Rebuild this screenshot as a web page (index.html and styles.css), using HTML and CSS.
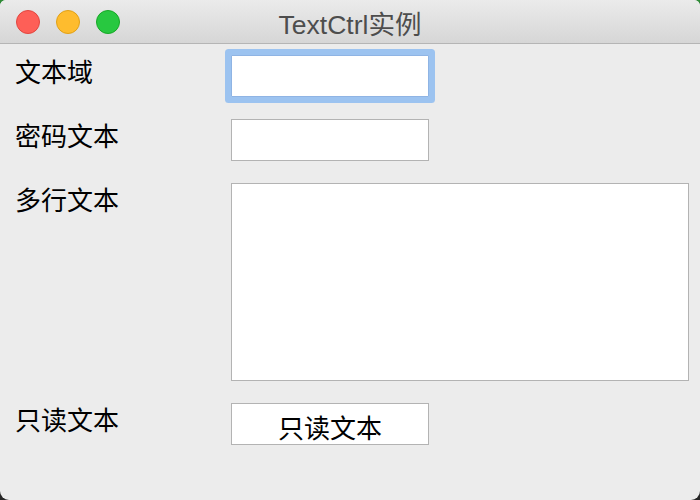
FILE: index.html
```html
<!DOCTYPE html>
<html lang="zh">
<head>
<meta charset="utf-8">
<title>TextCtrl实例</title>
<link rel="stylesheet" href="styles.css">
</head>
<body>
<div class="window">
  <header class="titlebar">
    <div class="lights">
      <span class="light red"></span>
      <span class="light yellow"></span>
      <span class="light green"></span>
    </div>
    <div class="title">TextCtrl实例</div>
    <div class="spacer"></div>
  </header>
  <main class="form">
    <label class="label" for="f1">文本域</label>
    <div class="cell"><input id="f1" class="field focused" type="text"></div>

    <label class="label" for="f2">密码文本</label>
    <div class="cell"><input id="f2" class="field" type="password"></div>

    <label class="label" for="f3">多行文本</label>
    <div class="cell"><textarea id="f3" class="field multi"></textarea></div>

    <label class="label" for="f4">只读文本</label>
    <div class="cell"><input id="f4" class="field readonly" type="text" value="只读文本" readonly></div>
  </main>
</div>
</body>
</html>
```

FILE: styles.css
```css
html {
  background: linear-gradient(#2f8a36 0 50%, #262626 50% 100%);
  height: 100%;
}
body {
  margin: 0;
  width: 700px;
  height: 500px;
  font-family: "Liberation Sans", "Noto Sans CJK SC", sans-serif;
}
.window {
  width: 700px;
  height: 500px;
  background: #ececec;
  border-radius: 6px 6px 9px 9px;
  overflow: hidden;
  display: flex;
  flex-direction: column;
}
.titlebar {
  height: 43px;
  flex: none;
  background: linear-gradient(#ebebeb, #d6d6d6);
  border-bottom: 1px solid #b5b5b5;
  display: grid;
  grid-template-columns: 1fr auto 1fr;
  align-items: center;
}
.lights {
  display: flex;
  gap: 16px;
  padding-left: 16px;
}
.light {
  width: 24px;
  height: 24px;
  border-radius: 50%;
  box-sizing: border-box;
}
.red { background: #fe5f57; border: 1px solid #e2463f; }
.yellow { background: #febc2e; border: 1px solid #e1a116; }
.green { background: #28c840; border: 1px solid #17a826; }
.title {
  font-size: 26.5px;
  color: #4d4d4d;
  padding-top: 1px;
}
.form {
  display: grid;
  grid-template-columns: 216px 1fr;
  row-gap: 22px;
  padding: 11px 0 0 15px;
  align-items: start;
}
.label {
  font-family: "Noto Sans CJK SC", sans-serif;
  font-size: 26px;
  line-height: 32px;
  color: #000;
}
.cell {
  position: relative;
  display: flex;
}
.field {
  width: 198px;
  height: 42px;
  box-sizing: border-box;
  border: 1px solid #b3b3b3;
  background: #fff;
  margin: 0;
  padding: 0;
  outline: none;
  font-family: "Noto Sans CJK SC", sans-serif;
  font-size: 26px;
  color: #000;
  resize: none;
}
.focused {
  border-color: #8fb4e4;
  box-shadow: 0 0 0 6px #9cc3f0;
  border-radius: 1px;
}
.multi {
  width: 458px;
  height: 198px;
}
.readonly {
  text-align: center;
  padding-top: 4px;
}
```
